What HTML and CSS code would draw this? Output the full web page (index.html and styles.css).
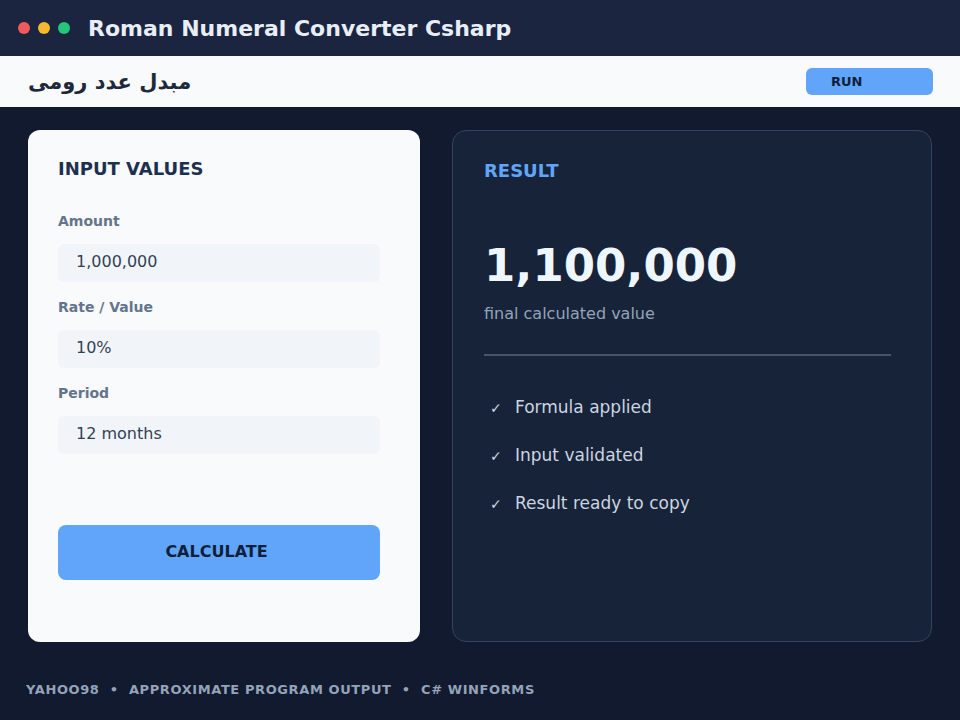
FILE: index.html
```html
<!DOCTYPE html>
<html lang="en">
<head>
    <meta charset="UTF-8">
    <meta name="viewport" content="width=device-width, initial-scale=1.0">
    <title>Roman Numeral Converter Csharp</title>
    <link rel="stylesheet" href="styles.css">
</head>
<body>
    <div class="title-bar">
        <div class="dots">
            <span class="dot dot-red"></span>
            <span class="dot dot-yellow"></span>
            <span class="dot dot-green"></span>
        </div>
        <h1 class="app-title">Roman Numeral Converter Csharp</h1>
    </div>

    <div class="tool-bar">
        <p class="tool-title" dir="rtl">مبدل عدد رومی</p>
        <button class="run-button">RUN</button>
    </div>

    <div class="main">
        <div class="input-card">
            <h2 class="card-heading">INPUT VALUES</h2>
            <p class="field-label">Amount</p>
            <div class="field-box">1,000,000</div>
            <p class="field-label">Rate / Value</p>
            <div class="field-box">10%</div>
            <p class="field-label">Period</p>
            <div class="field-box">12 months</div>
            <button class="calc-button">CALCULATE</button>
        </div>

        <div class="result-card">
            <h2 class="result-heading">RESULT</h2>
            <p class="result-value">1,100,000</p>
            <p class="result-caption">final calculated value</p>
            <div class="divider"></div>
            <ul class="check-list">
                <li><span class="check">✓</span>Formula applied</li>
                <li><span class="check">✓</span>Input validated</li>
                <li><span class="check">✓</span>Result ready to copy</li>
            </ul>
        </div>
    </div>

    <div class="footer">YAHOO98 &nbsp;•&nbsp; APPROXIMATE PROGRAM OUTPUT &nbsp;•&nbsp; C# WINFORMS</div>
</body>
</html>
```

FILE: styles.css
```css
body {
    margin: 0;
    font-family: "DejaVu Sans", Verdana, sans-serif;
    background-color: #111a2e;
    width: 960px;
    height: 720px;
    overflow: hidden;
}

.title-bar {
    display: flex;
    align-items: center;
    height: 56px;
    padding-left: 18px;
    background-color: #1b2540;
}

.dots {
    display: flex;
    gap: 8px;
    margin-right: 18px;
}

.dot {
    width: 12px;
    height: 12px;
    border-radius: 50%;
}

.dot-red { background-color: #f05a5a; }
.dot-yellow { background-color: #f5b82e; }
.dot-green { background-color: #22c57a; }

.app-title {
    margin: 0;
    font-size: 22px;
    font-weight: bold;
    color: #e8eef8;
}

.tool-bar {
    display: flex;
    align-items: center;
    justify-content: space-between;
    height: 51px;
    padding: 0 27px 0 28px;
    background-color: #f8fafc;
}

.tool-title {
    margin: 0;
    font-size: 21px;
    font-weight: bold;
    color: #1e293b;
}

.run-button {
    width: 127px;
    height: 27px;
    padding: 0 0 0 25px;
    border: none;
    border-radius: 6px;
    background-color: #60a5fa;
    color: #0f1f3a;
    font-family: inherit;
    font-size: 13px;
    font-weight: bold;
    text-align: left;
}

.main {
    display: grid;
    grid-template-columns: 392px 1fr;
    gap: 32px;
    padding: 23px 28px 0 28px;
    height: 512px;
}

.input-card {
    display: flex;
    flex-direction: column;
    padding: 28px 40px 0 30px;
    background-color: #f8fafc;
    border-radius: 12px;
}

.card-heading {
    margin: 0 0 32px 0;
    font-size: 18px;
    line-height: 22px;
    font-weight: bold;
    color: #1e3050;
}

.field-label {
    margin: 0 0 13px 0;
    font-size: 14px;
    line-height: 19px;
    font-weight: bold;
    color: #64748b;
}

.field-box {
    height: 38px;
    line-height: 36px;
    padding-left: 18px;
    margin-bottom: 16px;
    background-color: #f1f5f9;
    border-radius: 6px;
    font-size: 16px;
    color: #334155;
}

.calc-button {
    height: 55px;
    margin-top: 55px;
    padding: 0 5px 3px 0;
    border: none;
    border-radius: 8px;
    background-color: #60a5fa;
    color: #0f1f3a;
    font-family: inherit;
    font-size: 16px;
    font-weight: bold;
}

.result-card {
    padding: 29px 40px 0 31px;
    background-color: #172338;
    border: 1px solid #34435e;
    border-radius: 14px;
}

.result-heading {
    margin: 0;
    font-size: 18px;
    line-height: 22px;
    font-weight: bold;
    color: #60a5fa;
}

.result-value {
    margin: 58px 0 0 0;
    font-size: 45px;
    line-height: 52px;
    font-weight: bold;
    color: #eef6ff;
}

.result-caption {
    margin: 11px 0 0 0;
    font-size: 16px;
    line-height: 22px;
    color: #94a3b8;
}

.divider {
    height: 2px;
    margin-top: 29px;
    background-color: #475569;
}

.check-list {
    list-style: none;
    margin: 39px 0 0 0;
    padding: 0;
}

.check-list li {
    height: 48px;
    line-height: 24px;
    font-size: 17px;
    color: #cbd5e1;
}

.check {
    display: inline-block;
    width: 31px;
    padding-left: 6px;
    box-sizing: border-box;
    font-size: 14px;
}

.footer {
    padding: 40px 0 0 26px;
    font-size: 13px;
    font-weight: bold;
    letter-spacing: 0.6px;
    color: #94a3b8;
}
```
